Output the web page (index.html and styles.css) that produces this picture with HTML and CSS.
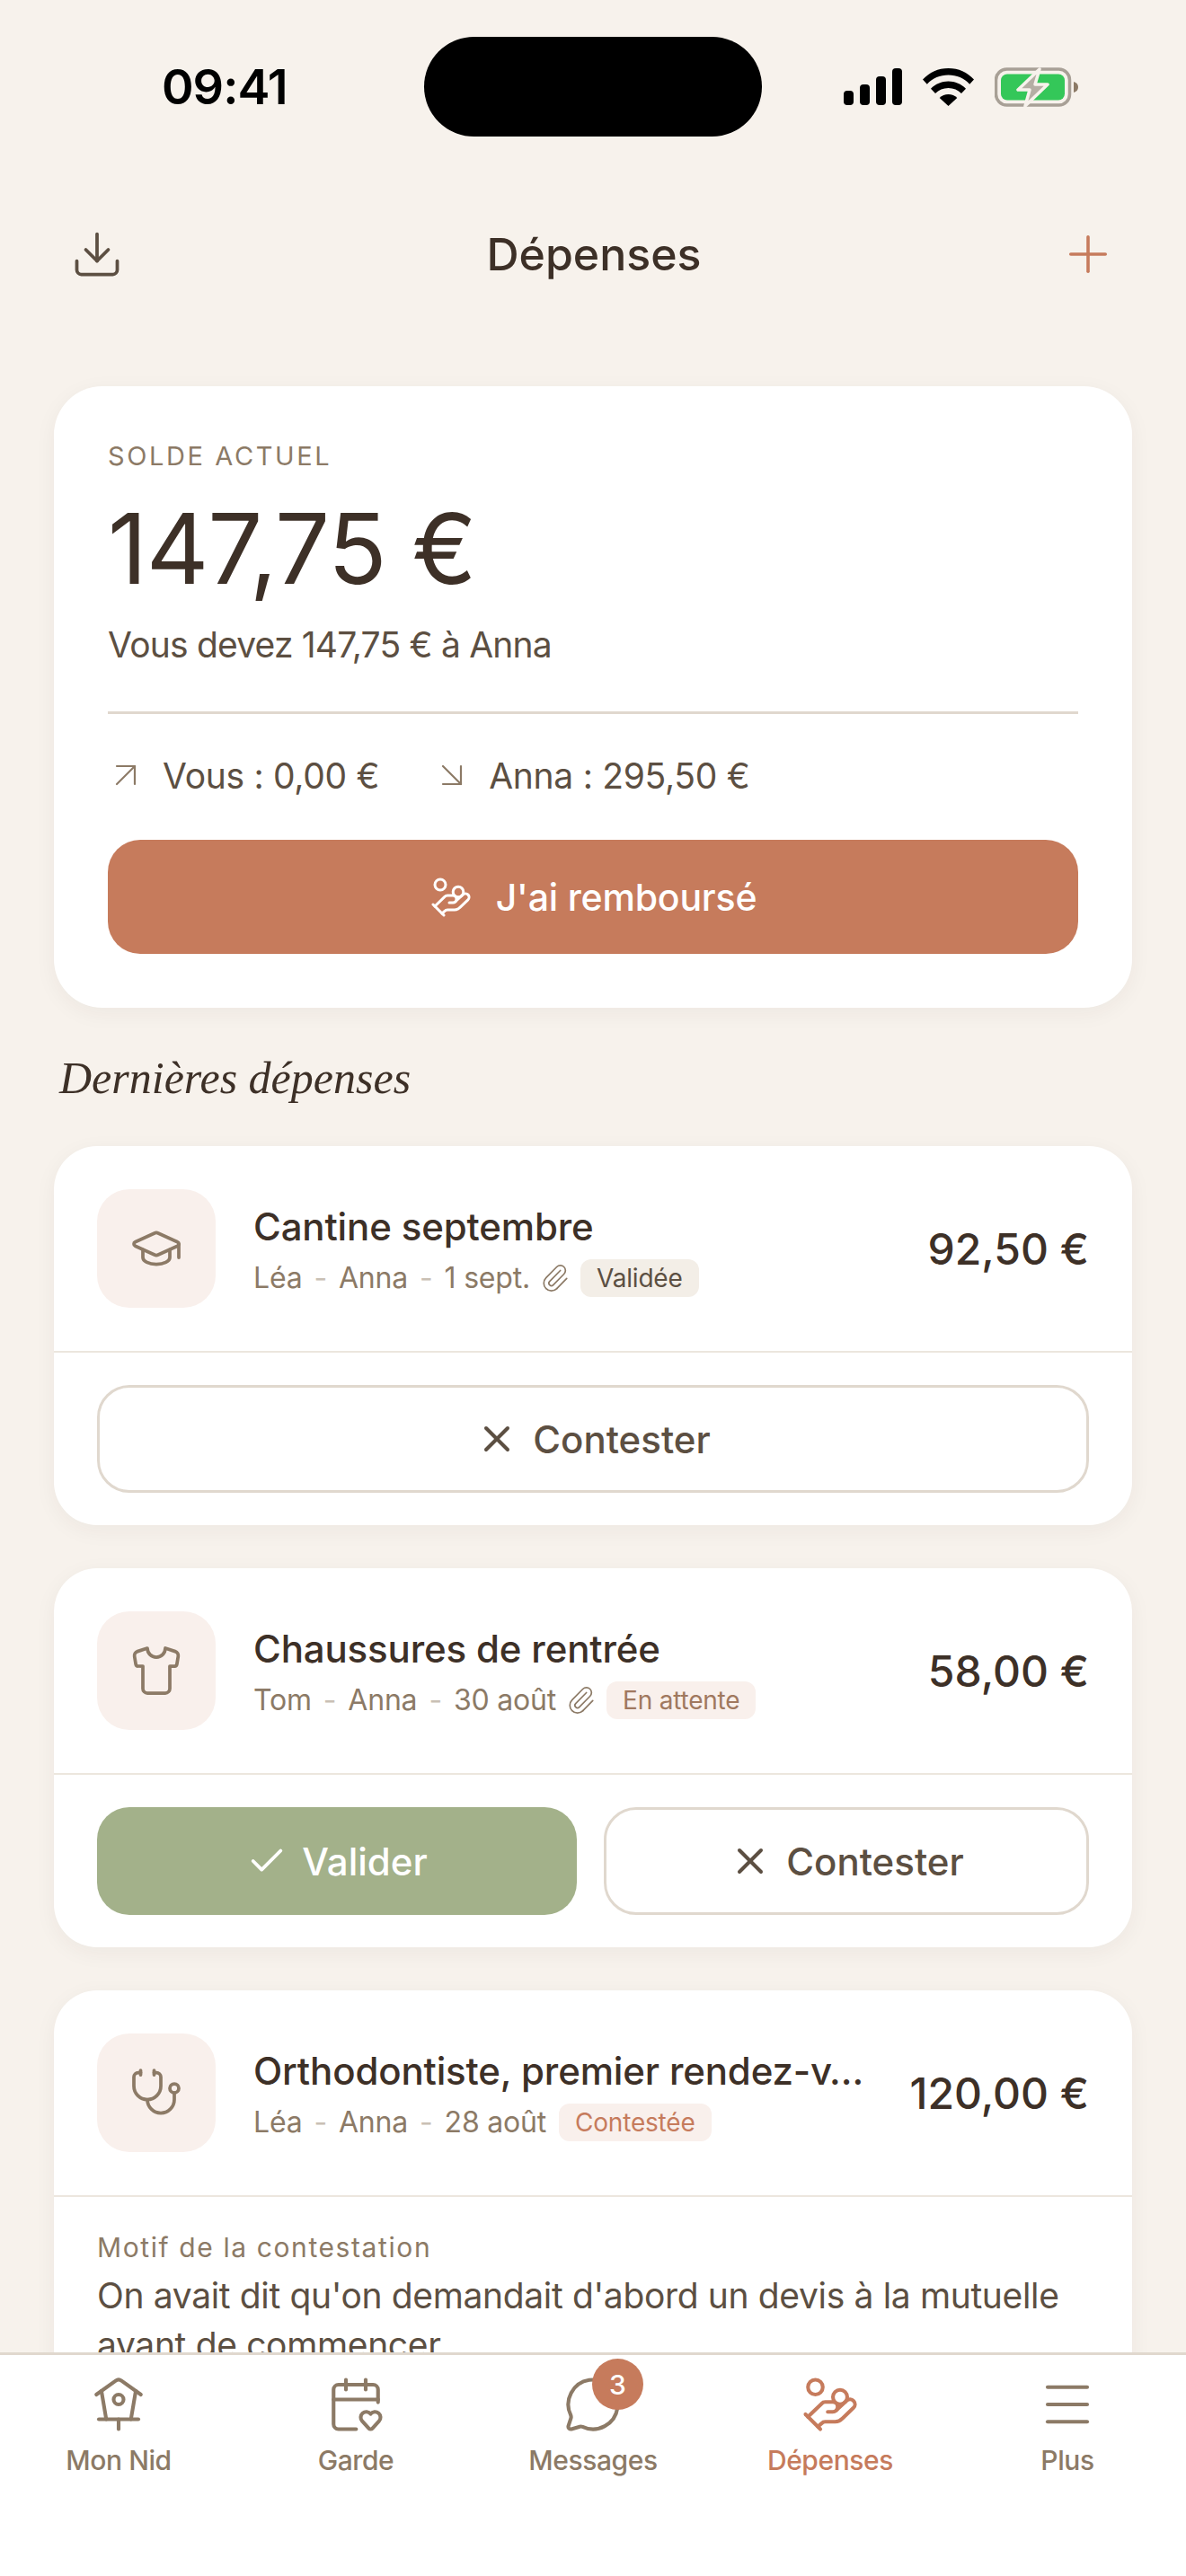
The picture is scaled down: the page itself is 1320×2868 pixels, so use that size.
FILE: index.html
```html
<!DOCTYPE html>
<html lang="fr">
<head>
<meta charset="utf-8">
<title>Dépenses</title>
<link rel="stylesheet" href="styles.css">
</head>
<body>
<div class="app">
  <div class="status">
    <span class="time">09:41</span>
    <div class="island"></div>
    <div class="status-icons">
      <svg class="signal" viewBox="0 0 65 41"><rect x="0" y="25" width="11" height="16" rx="4"/><rect x="18" y="18" width="11" height="23" rx="4"/><rect x="36" y="9" width="11" height="32" rx="4"/><rect x="54" y="0" width="11" height="41" rx="4"/></svg>
      <svg class="wifi" viewBox="0 0 57 42"><path d="M28.500 0C17 0 7.500 4.500 0 12.500l4.800 5.200C11 11 19.200 7.500 28.500 7.500S46 11 52.200 17.700l4.800-5.200C49.500 4.500 40 0 28.500 0z"/><path d="M28.500 14.500c-7.500 0-14.300 3-19.500 8.200l5 5.400c3.800-3.900 8.800-6.100 14.500-6.100S39.200 24.200 43 28.100l5-5.400c-5.200-5.200-12-8.200-19.500-8.200z"/><path d="M28.500 29c-3.800 0-7.200 1.500-9.800 4L28.500 42l9.800-9c-2.600-2.500-6-4-9.800-4z"/></svg>
      <svg class="battery" viewBox="0 0 94 44"><rect x="1.500" y="2" width="82" height="40" rx="12" fill="none" stroke="#a8a096" stroke-width="3.500"/><rect x="7" y="7.500" width="71" height="29" rx="7" fill="#34c759"/><path d="M88 16c3.500 1 5 3 5 6s-1.500 5-5 6z" fill="#8c7a66"/><path d="M50 2 26 25h13l-5 18 25-24H45z" fill="#b5aea4" stroke="#f7f2ec" stroke-width="3.500" stroke-linejoin="round"/></svg>
    </div>
  </div>

  <header class="topbar">
    <svg class="icon-download" viewBox="0 0 24 24"><path d="M12 15V3"/><path d="M21 15v4a2 2 0 0 1-2 2H5a2 2 0 0 1-2-2v-4"/><path d="m7 10 5 5 5-5"/></svg>
    <h1 class="page-title">Dépenses</h1>
    <svg class="icon-plus" viewBox="0 0 24 24"><path d="M5 12h14"/><path d="M12 5v14"/></svg>
  </header>

  <main class="scroll">
    <section class="balance">
      <div class="balance-label">SOLDE ACTUEL</div>
      <div class="balance-amount">147,75 €</div>
      <div class="balance-sub">Vous devez 147,75 € à Anna</div>
      <div class="balance-rule"></div>
      <div class="balance-row">
        <span class="split"><svg class="icon-arrow" viewBox="0 0 24 24"><path d="M7 7h10v10"/><path d="M7 17 17 7"/></svg>Vous : 0,00 €</span>
        <span class="split"><svg class="icon-arrow" viewBox="0 0 24 24"><path d="m7 7 10 10"/><path d="M17 7v10H7"/></svg>Anna : 295,50 €</span>
      </div>
      <button class="btn-pay"><svg class="icon-hand" viewBox="0 0 24 24"><path d="M11 15h2a2 2 0 1 0 0-4h-3c-.6 0-1.100.2-1.400.6L3 17"/><path d="m7 21 1.600-1.400c.3-.4.8-.6 1.400-.6h4c1.100 0 2.100-.4 2.800-1.200l4.600-4.400a2 2 0 0 0-2.750-2.910l-4.200 3.900"/><path d="m2 16 6 6"/><circle cx="16" cy="9" r="2.900"/><circle cx="6" cy="5" r="3"/></svg>J'ai remboursé</button>
    </section>

    <h2 class="section-title">Dernières dépenses</h2>

    <article class="card">
      <div class="card-head">
        <div class="thumb"><svg viewBox="0 0 24 24"><path d="M21.420 10.922a1 1 0 0 0-.019-1.838L12.830 5.180a2 2 0 0 0-1.660 0L2.600 9.080a1 1 0 0 0 0 1.832l8.570 3.908a2 2 0 0 0 1.660 0z"/><path d="M22 10v6"/><path d="M6 12.500V16a6 3 0 0 0 12 0v-3.500"/></svg></div>
        <div class="info">
          <div class="name">Cantine septembre</div>
          <div class="meta"><span>Léa</span><span class="sep">-</span><span>Anna</span><span class="sep">-</span><span>1 sept.</span><svg class="clip" viewBox="0 0 24 24"><path d="M13.234 20.252 21 12.300"/><path d="m16 6-8.414 8.586a2 2 0 0 0 0 2.828 2 2 0 0 0 2.828 0l8.414-8.586a4 4 0 0 0 0-5.656 4 4 0 0 0-5.656 0l-8.415 8.585a6 6 0 1 0 8.486 8.486"/></svg><span class="tag tag-ok">Validée</span></div>
        </div>
        <div class="price">92,50 €</div>
      </div>
      <div class="card-actions">
        <button class="btn btn-outline"><svg class="icon-x" viewBox="0 0 24 24"><path d="M18 6 6 18"/><path d="m6 6 12 12"/></svg>Contester</button>
      </div>
    </article>

    <article class="card">
      <div class="card-head">
        <div class="thumb"><svg viewBox="0 0 24 24"><path d="M20.380 3.460 16 2a4 4 0 0 1-8 0L3.620 3.460a2 2 0 0 0-1.340 2.230l.58 3.470a1 1 0 0 0 .99.84H6v10c0 1.100.9 2 2 2h8a2 2 0 0 0 2-2V10h2.150a1 1 0 0 0 .99-.84l.58-3.470a2 2 0 0 0-1.340-2.230z"/></svg></div>
        <div class="info">
          <div class="name">Chaussures de rentrée</div>
          <div class="meta"><span>Tom</span><span class="sep">-</span><span>Anna</span><span class="sep">-</span><span>30 août</span><svg class="clip" viewBox="0 0 24 24"><path d="M13.234 20.252 21 12.300"/><path d="m16 6-8.414 8.586a2 2 0 0 0 0 2.828 2 2 0 0 0 2.828 0l8.414-8.586a4 4 0 0 0 0-5.656 4 4 0 0 0-5.656 0l-8.415 8.585a6 6 0 1 0 8.486 8.486"/></svg><span class="tag tag-wait">En attente</span></div>
        </div>
        <div class="price">58,00 €</div>
      </div>
      <div class="card-actions">
        <button class="btn btn-green"><svg class="icon-check" viewBox="0 0 24 24"><path d="M20 6 9 17l-5-5"/></svg>Valider</button>
        <button class="btn btn-outline"><svg class="icon-x" viewBox="0 0 24 24"><path d="M18 6 6 18"/><path d="m6 6 12 12"/></svg>Contester</button>
      </div>
    </article>

    <article class="card">
      <div class="card-head">
        <div class="thumb"><svg viewBox="0 0 24 24"><path d="M11 2v2"/><path d="M5 2v2"/><path d="M5 3H4a2 2 0 0 0-2 2v4a6 6 0 0 0 12 0V5a2 2 0 0 0-2-2h-1"/><path d="M8 15a6 6 0 0 0 12 0v-3"/><circle cx="20" cy="10" r="2"/></svg></div>
        <div class="info">
          <div class="name">Orthodontiste, premier rendez-v…</div>
          <div class="meta"><span>Léa</span><span class="sep">-</span><span>Anna</span><span class="sep">-</span><span>28 août</span><span class="tag tag-bad">Contestée</span></div>
        </div>
        <div class="price">120,00 €</div>
      </div>
      <div class="reason">
        <div class="reason-label">Motif de la contestation</div>
        <p class="reason-text">On avait dit qu'on demandait d'abord un devis à la mutuelle avant de commencer</p>
      </div>
    </article>
  </main>

  <nav class="tabs">
    <div class="tab">
      <svg viewBox="0 0 24 24"><path d="M12 18v4"/><path d="m17 18 1.956-11.468"/><path d="m3 8 7.820-5.615a2 2 0 0 1 2.360 0L21 8"/><path d="M4 18h16"/><path d="M7 18 5.044 6.532"/><circle cx="12" cy="10" r="2"/></svg>
      <span>Mon Nid</span>
    </div>
    <div class="tab">
      <svg viewBox="0 0 24 24"><path d="M12.127 22H5a2 2 0 0 1-2-2V6a2 2 0 0 1 2-2h14a2 2 0 0 1 2 2v5.125"/><path d="M14.620 18.800A2.250 2.250 0 1 1 18 15.836a2.250 2.250 0 1 1 3.380 2.966l-2.626 2.856a.998.998 0 0 1-1.507 0z"/><path d="M16 2v4"/><path d="M3 10h18"/><path d="M8 2v4"/></svg>
      <span>Garde</span>
    </div>
    <div class="tab">
      <div class="tab-icon">
        <svg viewBox="0 0 24 24"><path d="M2.992 16.342a2 2 0 0 1 .094 1.167l-1.065 3.290a1 1 0 0 0 1.236 1.168l3.413-.998a2 2 0 0 1 1.099.092 10 10 0 1 0-4.777-4.719"/></svg>
        <b class="count">3</b>
      </div>
      <span>Messages</span>
    </div>
    <div class="tab tab-active">
      <svg viewBox="0 0 24 24"><path d="M11 15h2a2 2 0 1 0 0-4h-3c-.6 0-1.100.2-1.400.6L3 17"/><path d="m7 21 1.600-1.400c.3-.4.8-.6 1.400-.6h4c1.100 0 2.100-.4 2.800-1.200l4.600-4.400a2 2 0 0 0-2.750-2.910l-4.200 3.900"/><path d="m2 16 6 6"/><circle cx="16" cy="9" r="2.900"/><circle cx="6" cy="5" r="3"/></svg>
      <span>Dépenses</span>
    </div>
    <div class="tab">
      <svg viewBox="0 0 24 24"><path d="M4 5h16"/><path d="M4 12h16"/><path d="M4 19h16"/></svg>
      <span>Plus</span>
    </div>
  </nav>
</div>
</body>
</html>
```

FILE: styles.css
```css
* { box-sizing: border-box; }
html, body { margin: 0; padding: 0; }
body {
  background: #f7f2ec;
  font-family: Inter, "Liberation Sans", sans-serif;
  color: #3d3027;
}
svg { fill: none; stroke: currentColor; stroke-width: 1.5; stroke-linecap: round; stroke-linejoin: round; flex: none; display: block; }

.app { width: 1320px; height: 2868px; display: flex; flex-direction: column; overflow: hidden; }

.status { height: 180px; padding: 41px 119px 0 180px; display: flex; align-items: flex-start; flex: none; }
.time { font-size: 54px; line-height: 111px; font-weight: 600; color: #000; letter-spacing: -1px; width: 292px; flex: none; }
.island { width: 376px; height: 111px; border-radius: 56px; background: #000; flex: none; }
.status-icons { display: flex; align-items: center; height: 111px; margin-left: 91px; }
.signal { width: 65px; height: 41px; stroke: none; fill: #000; margin-right: 23px; }
.wifi { width: 57px; height: 42px; stroke: none; fill: #000; margin-right: 23px; }
.battery { width: 94px; height: 44px; stroke: none; }

.topbar { height: 206px; flex: none; display: grid; grid-template-columns: 1fr auto 1fr; align-items: center; padding: 0 76px 0 78px; }
.page-title { margin: 0; font-size: 50px; font-weight: 450; color: #3d3027; }
.icon-download { width: 60px; height: 60px; color: #5c4f42; }
.icon-plus { width: 66px; height: 66px; color: #c67b5c; stroke-width: 1.3; justify-self: end; }

.scroll { flex: 1; min-height: 0; overflow: hidden; padding: 44px 60px 0; }

.balance { background: #fff; border-radius: 54px; padding: 60px; box-shadow: 0 6px 24px rgba(61,48,39,.05); height: 692px; margin-bottom: 48px; }
.balance-label { font-size: 29px; line-height: 36px; letter-spacing: 2.6px; color: #8c7a66; margin-bottom: 25px; }
.balance-amount { font-size: 108px; line-height: 120px; font-weight: 430; color: #3d3027; letter-spacing: -1.200px; margin-bottom: 19px; }
.balance-sub { font-size: 39px; line-height: 56px; color: #5c4f42; margin-bottom: 46px; letter-spacing: -0.8px; }
.balance-rule { height: 3px; background: #e0d8ce; margin-bottom: 40px; }
.balance-row { display: flex; gap: 61px; height: 56px; align-items: center; margin-bottom: 44px; }
.split { display: flex; align-items: center; gap: 17px; font-size: 39px; color: #5c4f42; letter-spacing: -0.3px; }
.icon-arrow { width: 48px; height: 48px; color: #8c7a66; stroke-width: 1.1; margin-left: -4px; }

.btn-pay { width: 100%; height: 127px; border: 0; border-radius: 36px; background: #c67b5c; color: #fff; font: 450 41px Inter, sans-serif; display: flex; align-items: center; justify-content: center; gap: 26px; letter-spacing: -0.2px; }
.icon-hand { width: 48px; height: 48px; }

.section-title { margin: 0 0 46px 6px; font-family: "Liberation Serif", serif; font-style: italic; font-weight: 400; font-size: 50px; line-height: 60px; color: #3d3027; }

.card { background: #fff; border-radius: 48px; margin-bottom: 48px; box-shadow: 0 6px 24px rgba(61,48,39,.05); overflow: hidden; }
.card-head { display: flex; align-items: center; padding: 48px; border-bottom: 2px solid #ece6de; height: 230px; }
.thumb { width: 132px; height: 132px; border-radius: 36px; background: #f9f0ec; display: flex; align-items: center; justify-content: center; color: #8c7a66; flex: none; margin-right: 42px; }
.thumb svg { width: 60px; height: 60px; }
.info { flex: 1; min-width: 0; display: flex; flex-direction: column; gap: 9px; padding-top: 2px; }
.name { font-size: 42px; line-height: 54px; font-weight: 450; color: #3d3027; white-space: nowrap; letter-spacing: -0.15px; }
.meta { display: flex; align-items: center; font-size: 32px; line-height: 42px; color: #8c7a66; letter-spacing: -0.2px; white-space: nowrap; }
.sep { color: #c9c0b4; margin: 0 13px; }
.clip { width: 34px; height: 34px; margin: 0 11px 0 11px; color: #8c7a66; stroke-width: 1.2; }
.tag { font-size: 28px; line-height: 42px; padding: 0 18px; border-radius: 12px; letter-spacing: -0.2px; }
.tag-ok { background: #f3eee7; color: #5c4f42; }
.tag-wait { background: #f9f0ec; color: #a0785f; }
.tag-bad { background: #f9f0ec; color: #c67b5c; margin-left: 14px; }
.price { font-size: 48px; font-weight: 450; color: #3d3027; margin-left: 30px; flex: none; }

.card-actions { display: flex; gap: 30px; padding: 36px 48px; }
.btn { box-sizing: content-box; flex: 1; height: 114px; border-radius: 36px; font: 450 42px Inter, sans-serif; display: flex; align-items: center; justify-content: center; gap: 16px; padding: 0; }
.btn-outline { border: 3px solid #e0d8ce; background: #fff; color: #5c4f42; }
.btn-green { border: 0; height: 120px; background: #a3b18a; color: #fff; }
.icon-x { width: 48px; height: 48px; stroke-width: 2; }
.icon-check { width: 46px; height: 46px; stroke-width: 2; }

.reason { padding: 38px 48px; }
.reason-label { font-size: 30px; line-height: 36px; letter-spacing: 1.6px; color: #8c7a66; margin-bottom: 8px; }
.reason-text { margin: 0; font-size: 39px; line-height: 55px; color: #5c4f42; letter-spacing: -0.35px; }

.tabs { height: 249px; flex: none; background: #fff; border-top: 3px solid #e0d8ce; display: flex; padding-top: 22px; }
.tab { width: 264px; display: flex; flex-direction: column; align-items: center; color: #8c7a66; }
.tab svg { width: 66px; height: 66px; }
.tab span { font-size: 30px; line-height: 40px; margin-top: 9px; font-weight: 450; letter-spacing: -0.4px; }
.tab-active { color: #c67b5c; }
.tab-icon { position: relative; width: 66px; height: 66px; }
.count { position: absolute; left: 32px; top: -18px; width: 57px; height: 57px; border-radius: 50%; background: #c67b5c; color: #fff; font-size: 30px; font-weight: 450; display: flex; align-items: center; justify-content: center; }
```
